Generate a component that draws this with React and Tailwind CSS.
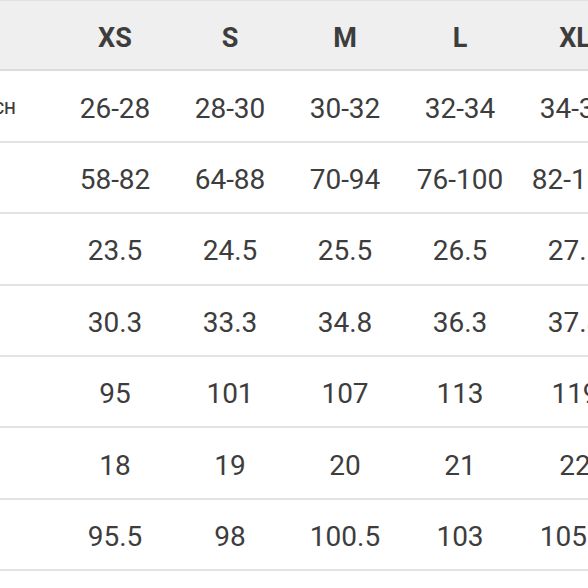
import React from 'react';

const sizes = ['XS', 'S', 'M', 'L', 'XL'];

const rows = [
  { label: 'WAIST INCH', values: ['26-28', '28-30', '30-32', '32-34', '34-36'] },
  { label: '', values: ['58-82', '64-88', '70-94', '76-100', '82-106'] },
  { label: '', values: ['23.5', '24.5', '25.5', '26.5', '27.5'] },
  { label: '', values: ['30.3', '33.3', '34.8', '36.3', '37.8'] },
  { label: '', values: ['95', '101', '107', '113', '119'] },
  { label: '', values: ['18', '19', '20', '21', '22'] },
  { label: '', values: ['95.5', '98', '100.5', '103', '105.5'] },
];

const gridCols = 'grid grid-cols-[57.5px_repeat(5,115px)] w-[632.5px]';

const App = () => {
  return (
    <div
      className="h-[588px] w-[588px] overflow-hidden bg-white text-[#3d3d3d]"
      style={{ fontFamily: 'Roboto, "Liberation Sans", sans-serif' }}
    >
      <div className={`${gridCols} h-[71.4px] border-t border-t-[#e2e2e2] border-b-2 border-b-[#dcdcdc] bg-[#efefef]`}>
        <div />
        {sizes.map((s) => (
          <div key={s} className="flex items-center justify-center pt-[6px] text-[27px] font-bold">
            {s}
          </div>
        ))}
      </div>

      {rows.map((row, i) => (
        <div key={i} className={`${gridCols} h-[71.4px] border-b-2 border-b-[#e3e3e3]`}>
          <div className="flex items-center justify-end overflow-hidden pr-[42px] pt-[6px]">
            <span className="whitespace-nowrap text-[16px] font-medium uppercase">{row.label}</span>
          </div>
          {row.values.map((v, j) => (
            <div key={j} className="flex items-center justify-center pt-[5px] text-[28px]">
              {v}
            </div>
          ))}
        </div>
      ))}
    </div>
  );
};

export default App;
